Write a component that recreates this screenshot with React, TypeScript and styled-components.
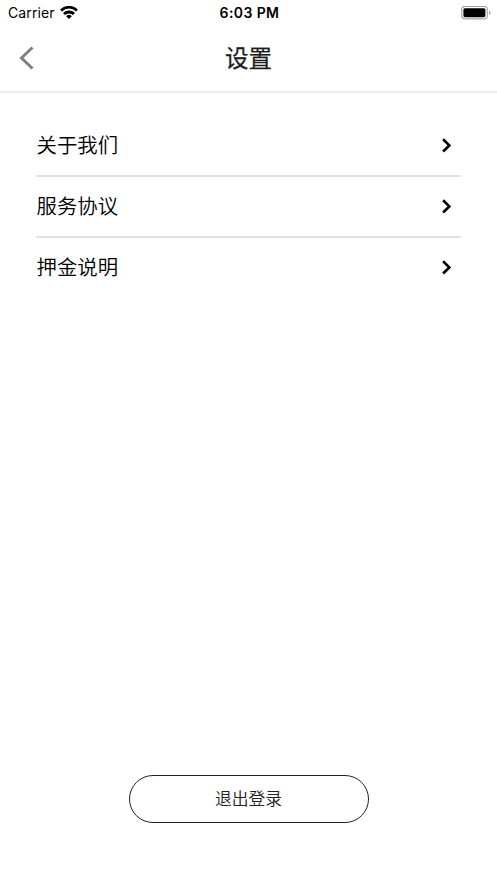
import React from "react";
import styled, { createGlobalStyle } from "styled-components";

const Global = createGlobalStyle`
  * { box-sizing: border-box; }
  body { margin: 0; background: #fff; }
`;
const Screen = styled.div`
  width: 497px;
  height: 883px;
  display: flex;
  flex-direction: column;
  background: #fff;
  color: #000;
  font-family: Inter, "Noto Sans CJK SC", sans-serif;
`;
const StatusBar = styled.div`
  height: 25px;
  flex: none;
  display: grid;
  grid-template-columns: 1fr auto 1fr;
  align-items: center;
  padding: 0 6px 0 8px;
  font-size: 14px;
  line-height: 25px;
`;
const Carrier = styled.div`
  display: flex;
  align-items: center;
  letter-spacing: 0.1px;
  gap: 5px;
`;
const Clock = styled.div`
  font-weight: 600;
  letter-spacing: 0.4px;
`;
const Power = styled.div`
  display: flex;
  justify-content: flex-end;
`;
const Header = styled.header`
  height: 68px;
  flex: none;
  display: grid;
  grid-template-columns: 60px 1fr 60px;
  align-items: center;
  border-bottom: 2px solid #ececec;
`;
const Back = styled.button`
  border: 0;
  background: none;
  padding: 0 0 0 19px;
  display: flex;
`;
const Title = styled.h1`
  margin: 0;
  padding-top: 1px;
  text-align: center;
  font-size: 23.6px;
  line-height: 36px;
  font-weight: 400;
  color: #1c1c1e;
  -webkit-text-stroke: 0.25px #1c1c1e;
`;
const List = styled.nav`
  flex: 1;
  padding: 23px 36px 0;
`;
const Row = styled.div<{ $last?: boolean }>`
  height: 61px;
  display: flex;
  align-items: center;
  justify-content: space-between;
  padding: 1px 9px 0 0.5px;
  border-bottom: 2px solid ${(p) => (p.$last ? "transparent" : "#e2e2e2")};
  font-size: 20.4px;
  font-weight: 350;
  line-height: 28px;
`;
const Logout = styled.button`
  width: 240px;
  height: 48px;
  margin: 0 auto 60px;
  border: 1px solid #222;
  border-radius: 24px;
  background: #fff;
  color: #222;
  font: 350 16.8px "Noto Sans CJK SC", sans-serif;
  padding: 0 0 2px;
`;

export default function App() {
  return (
    <Screen>
      <Global />
      <StatusBar>
        <Carrier>
          Carrier
          <svg width="18" height="14" viewBox="0 0 18 14" fill="none" stroke="#000" strokeWidth="2.8">
            <path d="M1 4.4a11.6 11.6 0 0 1 16 0M4 8a7.2 7.2 0 0 1 10 0" />
            <path d="M9 13 6.2 10.2a4 4 0 0 1 5.6 0z" fill="#000" stroke="none" />
          </svg>
        </Carrier>
        <Clock>6:03 PM</Clock>
        <Power>
          <svg width="30" height="14" viewBox="0 0 30 14">
            <rect x=".7" y=".5" width="25.6" height="12.3" rx="3.3" fill="none" stroke="#a5a5a5" strokeWidth="1.2" />
            <rect x="2.4" y="2.2" width="22" height="9" rx="1.6" />
            <path d="M28 4.5c2 .8 2 3.8 0 4.6z" fill="#a5a5a5" />
          </svg>
        </Power>
      </StatusBar>
      <Header>
        <Back aria-label="返回">
          <svg width="16" height="24" viewBox="0 0 16 24" fill="none" stroke="#808080" strokeWidth="3">
            <path d="M13.5 1.5 2.5 12l11 10.5" />
          </svg>
        </Back>
        <Title>设置</Title>
      </Header>
      <List>
        {["关于我们", "服务协议", "押金说明"].map((label, i) => (
          <Row key={label} $last={i === 2}>
            {label}
            <svg width="11" height="16" viewBox="0 0 11 16" fill="none" stroke="#000" strokeWidth="2.6">
              <path d="m2.1 1.3 6.2 6.1-6.2 6.1" />
            </svg>
          </Row>
        ))}
      </List>
      <Logout>退出登录</Logout>
    </Screen>
  );
}
